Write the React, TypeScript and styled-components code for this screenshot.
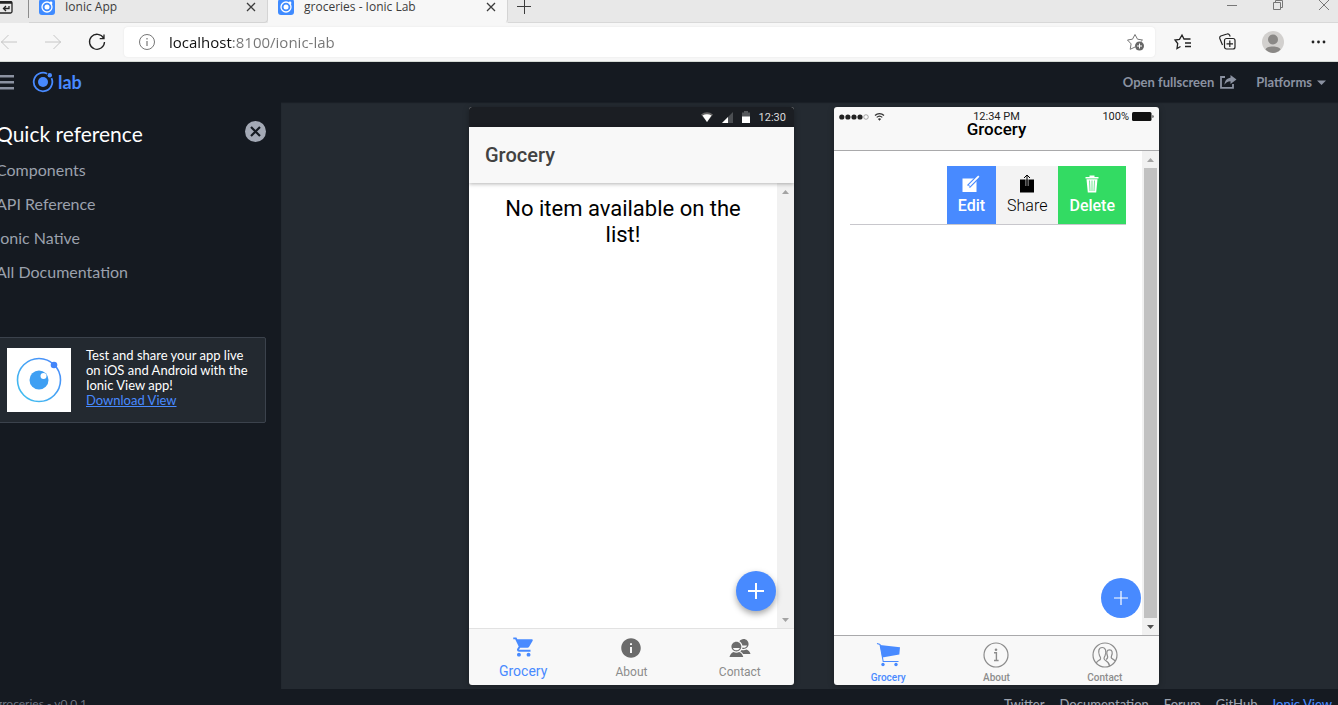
import React from 'react';
import styled, { createGlobalStyle, css } from 'styled-components';
import { IoMdCart, IoMdInformationCircle, IoMdContacts } from 'react-icons/io';

const GlobalStyle = createGlobalStyle`
  * { box-sizing: border-box; }
  body { margin: 0; background: #151a21; overflow: hidden; }
  button { border: 0; padding: 0; background: none; color: inherit; font: inherit; cursor: pointer; }
  h1, h2, p, ul { margin: 0; padding: 0; font-weight: 400; }
  ul { list-style: none; }
  svg { display: block; flex: none; }
`;

const systemFont = '"Open Sans", "Noto Sans", sans-serif';
const labFont = 'Lato, "Open Sans", sans-serif';
const appFont = 'Roboto, "Noto Sans", sans-serif';
const blue = '#488aff';

const Page = styled.div`
  display: flex;
  flex-direction: column;
  height: 100vh;
  overflow: hidden;
  font-family: ${labFont};
`;

/* Browser chrome */
const TabStrip = styled.div`
  display: flex;
  flex: none;
  height: 23px;
  background: #e8e8e8;
  font-family: ${systemFont};
  font-size: 12px;
  color: #3c3c3c;
`;
const StripStart = styled.div`
  width: 29px;
  height: 18px;
  padding-top: 1px;
  border-right: 1px solid #8c8c8c;
`;
const Tab = styled.div<{ $active?: boolean }>`
  display: flex;
  align-items: center;
  gap: 10px;
  width: ${p => (p.$active ? 240 : 239)}px;
  padding: 0 11px 8px 10px;
  border-bottom: 1px solid ${p => (p.$active ? '#f7f7f7' : '#d4d4d4')};
  border-right: 1px solid #d4d4d4;
  border-radius: 0 0 4px 0;
  background: ${p => (p.$active ? '#f7f7f7' : '#e8e8e8')};
`;
const TabTitle = styled.span`
  flex: 1;
  line-height: 14px;
  white-space: nowrap;
`;
const NewTab = styled.button`
  display: flex;
  justify-content: center;
  width: 32px;
  height: 22px;
  margin-right: auto;
`;
const StripRest = styled.div`
  display: flex;
  flex: 1;
  margin-right: -9px;
  border-bottom: 1px solid #d8d8d8;
`;
const WindowButton = styled.button`
  display: flex;
  justify-content: center;
  width: 46px;
  height: 14px;
`;
const Toolbar = styled.div`
  display: flex;
  flex: none;
  align-items: center;
  height: 39px;
  padding-bottom: 1px;
  background: #f7f7f7;
  border-bottom: 1px solid #d5dad5;
`;
const ToolGroup = styled.div<{ $end?: boolean }>`
  display: flex;
  gap: ${p => (p.$end ? 1 : 0)}px;
  margin: ${p => (p.$end ? '0 -2px 0 6px' : '0 5px 0 -13px')};
`;
const ToolButton = styled.button`
  display: flex;
  align-items: center;
  justify-content: center;
  width: 44px;
  height: 30px;
`;
const AddressBar = styled.label`
  display: flex;
  flex: 1;
  align-items: center;
  gap: 13px;
  height: 30px;
  padding: 0 9px 0 14px;
  border-radius: 4px;
  background: #fff;
  box-shadow: 0 0 2px #e2e2e2;
`;
const AddressInput = styled.input`
  flex: 1;
  min-width: 0;
  padding: 0;
  border: 0;
  outline: 0;
  font-family: ${systemFont};
  font-size: 15px;
  line-height: 22px;
  color: transparent;
  background: linear-gradient(90deg, #111 64px, #757575 64px);
  -webkit-background-clip: text;
  background-clip: text;
`;

/* Lab */
const LabHeader = styled.header`
  display: flex;
  flex: none;
  align-items: center;
  height: 40px;
  padding-right: 12px;
  background: #151a21;
  font-size: 13px;
  font-weight: 700;
  color: #8b92a1;
`;
const Brand = styled.a`
  display: flex;
  align-items: center;
  gap: 4px;
  margin: 0 auto 0 18px;
  font-size: 18px;
  line-height: 20px;
  color: ${blue};
  text-decoration: none;
`;
const HeaderButton = styled.button`
  display: flex;
  align-items: center;
  gap: 5px;
  margin-left: 19px;
`;
const Body = styled.div`
  display: flex;
  flex: 1;
  min-height: 0;
`;
const Sidebar = styled.aside`
  flex: none;
  width: 281px;
  padding: 18px 15px 0 0;
  overflow: hidden;
  background: #151a21;
`;
const SidebarHead = styled.div`
  display: flex;
  justify-content: space-between;
  margin-left: -4px;
`;
const SidebarTitle = styled.h1`
  font-size: 21px;
  line-height: 27px;
  color: #fff;
`;
const CloseButton = styled.button`
  height: 22px;
`;
const DocLinks = styled.ul`
  margin: 6px 0 48px -4px;
`;
const DocLink = styled.a`
  display: block;
  font-size: 16px;
  line-height: 34px;
  color: #9ba1ad;
  text-decoration: none;
`;
const Promo = styled.section`
  display: flex;
  gap: 15px;
  margin-left: -4px;
  padding: 10px;
  border: 1px solid #3b424c;
  border-radius: 2px;
  background: #232930;
`;
const PromoText = styled.p`
  font-size: 13px;
  line-height: 15px;
  color: #fff;
  white-space: nowrap;
`;
const PromoLink = styled.a`
  color: ${blue};
`;
const Stage = styled.main`
  display: flex;
  flex: 1;
  justify-content: center;
  gap: 40px;
  padding: 5px 0 4px 9px;
  background: #242a31;
  box-shadow: inset 0 1px 1px #1a1f26;
`;
const Footer = styled.footer`
  display: flex;
  flex: none;
  gap: 15px;
  height: 16px;
  padding: 7px 6px 0 0;
  overflow: hidden;
  background: #151a21;
  font-size: 13px;
  line-height: 16px;
  color: #6c7380;
`;
const Version = styled.span`
  margin: 0 auto 0 -4px;
  font-size: 12px;
`;
const FooterLink = styled.a<{ $accent?: boolean }>`
  font-weight: 500;
  color: ${p => (p.$accent ? blue : '#9ba1ad')};
  text-decoration: none;
`;

/* Phones */
const Phone = styled.section`
  display: flex;
  flex-direction: column;
  width: 325px;
  overflow: hidden;
  border-radius: 3px;
  background: #f8f8f8;
  box-shadow: 0 1px 6px rgba(0, 0, 0, 0.3);
  font-family: ${appFont};
`;
const AndroidStatus = styled.div`
  display: flex;
  flex: none;
  align-items: center;
  justify-content: flex-end;
  gap: 9px;
  height: 20px;
  padding-right: 8px;
  background: #1b1e23;
  color: #dcdcdc;
  font-size: 11px;
`;
const AndroidHeader = styled.h2`
  position: relative;
  z-index: 1;
  flex: none;
  padding: 0 16px;
  font-size: 20px;
  font-weight: 500;
  line-height: 56px;
  color: #424242;
  background: #f8f8f8;
  box-shadow: 0 1px 4px rgba(0, 0, 0, 0.3);
`;
const IosHeader = styled.div`
  flex: none;
  height: 44px;
  padding-top: 3px;
  border-bottom: 1px solid #a9a9ab;
  color: #000;
`;
const IosStatus = styled.div`
  display: grid;
  grid-template-columns: 1fr auto 1fr;
  align-items: center;
  height: 13px;
  padding: 0 5px;
  font-size: 11px;
  line-height: 13px;
  color: #222;
`;
const StatusStart = styled.span`
  display: flex;
  align-items: center;
  gap: 5px;
`;
const StatusEnd = styled.span`
  display: flex;
  align-items: center;
  justify-content: flex-end;
  gap: 3px;
`;
const IosTitle = styled.h2`
  font-size: 17px;
  font-weight: 500;
  line-height: 12px;
  text-align: center;
`;
const Content = styled.div`
  position: relative;
  display: flex;
  flex: 1;
  min-height: 0;
  background: #fff;
`;
const ContentBody = styled.div`
  flex: 1;
  padding: 15px 16px;
`;
const EmptyMessage = styled.p`
  margin-top: -2px;
  padding: 0 16px;
  font-size: 22px;
  line-height: 26px;
  text-align: center;
  color: #000;
`;
const ScrollTrack = styled.div`
  display: flex;
  flex: none;
  flex-direction: column;
  align-items: center;
  justify-content: space-between;
  width: 17px;
  background: #f1f1f1;
`;
const ScrollThumb = styled.div`
  flex: 1;
  width: 13px;
  background: #c1c1c1;
`;
const Fab = styled.button<{ $raised?: boolean }>`
  position: absolute;
  right: 18px;
  bottom: 17px;
  display: flex;
  align-items: center;
  justify-content: center;
  width: 40px;
  height: 40px;
  border-radius: 50%;
  background: ${blue};
  ${p => p.$raised && css`box-shadow: 0 3px 6px rgba(0, 0, 0, 0.35);`}
`;
const ItemRow = styled.div`
  display: flex;
  justify-content: flex-end;
  height: 59px;
  border-bottom: 1px solid #c8c7cc;
`;
const ItemAction = styled.button<{ $bg: string; $dark?: boolean }>`
  display: flex;
  flex-direction: column;
  align-items: center;
  gap: 2px;
  padding: 8px 11px 0;
  font-size: 16px;
  font-weight: ${p => (p.$dark ? 300 : 500)};
  line-height: 20px;
  color: ${p => (p.$dark ? '#000' : '#fff')};
  background: ${p => p.$bg};
`;
const TabBar = styled.nav<{ $ios?: boolean }>`
  display: grid;
  flex: none;
  grid-template-columns: repeat(3, 1fr);
  height: ${p => (p.$ios ? 50 : 57)}px;
  border-top: 1px solid ${p => (p.$ios ? '#a9a9ab' : '#e2e2e2')};
`;
const AndroidTab = styled.button<{ $selected?: boolean }>`
  display: flex;
  flex-direction: column;
  align-items: center;
  gap: ${p => (p.$selected ? 3 : 4)}px;
  padding-top: ${p => (p.$selected ? 6 : 7)}px;
  font-size: ${p => (p.$selected ? 14 : 12)}px;
  line-height: ${p => (p.$selected ? 18 : 16)}px;
  color: ${p => (p.$selected ? blue : '#8c8c8c')};
  svg { color: ${p => (p.$selected ? blue : '#6b6b6b')}; }
`;
const IosTab = styled.button<{ $selected?: boolean }>`
  display: flex;
  flex-direction: column;
  align-items: center;
  gap: 3px;
  padding-top: 6px;
  font-size: 10px;
  font-weight: 500;
  line-height: 14px;
  color: ${p => (p.$selected ? blue : '#8c8c8c')};
`;

const Line = ({ d, size = 18, width = 1, color = 'currentColor' }: { d: string; size?: number; width?: number; color?: string }) => (
  <svg width={size} height={size} viewBox={`0 0 ${size} ${size}`} fill="none" stroke={color} strokeWidth={width}>
    <path d={d} />
  </svg>
);

const Favicon = () => (
  <svg width="16" height="16" viewBox="0 0 16 16">
    <rect width="16" height="16" rx="3" fill="#3f8bff" />
    <circle cx="8" cy="8" r="5" fill="none" stroke="#fff" strokeWidth="1.3" />
    <circle cx="8" cy="8" r="2.5" fill="#fff" />
    <circle cx="12" cy="4" r="1.4" fill="#fff" />
  </svg>
);

const Arrow = ({ down, dark }: { down?: boolean; dark?: boolean }) => (
  <svg width="17" height="17" viewBox="0 0 17 17">
    <path d={down ? 'M5 7h7l-3.500 4z' : 'M5 11h7l-3.500 -4z'} fill={dark ? '#505050' : '#a3a3a3'} />
  </svg>
);

const IosCart = () => (
  <svg width="26" height="26" viewBox="0 0 26 26">
    <path d="M2 1.500 5 2.500 8.200 19.500H23.500" fill="none" stroke={blue} strokeWidth="1.100" />
    <path d="M5 3 25 5.300 24.300 12.500 7.300 15.500z" fill={blue} />
    <circle cx="8" cy="22.500" r="1.700" fill={blue} />
    <circle cx="21" cy="22.500" r="1.700" fill={blue} />
  </svg>
);

const IosInfo = () => (
  <svg width="26" height="26" viewBox="0 0 26 26" fill="none" stroke="#8c8c8c">
    <circle cx="13" cy="13" r="12" strokeWidth="1.200" />
    <path d="M11 10.700h2.400v7.500M11 18.500h4.600" strokeWidth="1.400" />
    <circle cx="13" cy="7.700" r="1.300" fill="#8c8c8c" stroke="none" />
  </svg>
);

const IosContacts = () => (
  <svg width="26" height="26" viewBox="0 0 26 26" fill="none" stroke="#8c8c8c" strokeWidth="1.200">
    <circle cx="13" cy="13" r="12" />
    <path d="M4.500 21c0-2 3.500-2.500 4-4 .4-1.500-.3-2-1-3.500C6 9.500 6.500 5.500 10.200 5.500s4.300 4 2.900 8c-.6 1.500-1.200 2-1 3.500.4 2 5.200 2 5.400 7" />
    <path d="M14 17.500c1.800-1 2-2 1.500-3.500-1.400-3.500-.8-6.200 2-6.200s3.400 2.700 2 6.200c-.6 1.500-.2 2.300.8 2.800 1.300.6 2 .9 2.500 2.200" />
  </svg>
);

const Wifi = () => (
  <svg width="11" height="10" viewBox="0 0 11 10" fill="none" stroke="#333">
    <path d="M1 3.500C3.500 1 7.500 1 10 3.500M2.700 5.400c1.600-1.500 4-1.500 5.600 0" strokeWidth="1.200" />
    <path d="M3.900 7c1-.9 2.200-.9 3.200 0L5.500 8.800z" fill="#333" stroke="none" />
  </svg>
);

const SignalDots = () => (
  <svg width="30" height="6" viewBox="0 0 30 6" fill="#222">
    <circle cx="2.800" cy="3" r="2.600" />
    <circle cx="8.900" cy="3" r="2.600" />
    <circle cx="15" cy="3" r="2.600" />
    <circle cx="21" cy="3" r="2.600" />
    <circle cx="27" cy="3" r="2.300" fill="none" stroke="#777" strokeWidth=".6" />
  </svg>
);

export default function App() {
  return (
    <>
      <GlobalStyle />
      <Page>
        <TabStrip>
          <StripStart>
            <svg width="13" height="13" viewBox="0 0 13 13" fill="none" stroke="#222">
              <path d="M0 .5h10.500a1.500 1.500 0 0 1 1.500 1.500v8.500a1.500 1.500 0 0 1-1.500 1.500H0M0 2h12M9 5v2.500H3.500M6 5 3.500 7.500 6 10" strokeWidth="1.300" />
            </svg>
          </StripStart>
          <Tab>
            <Favicon />
            <TabTitle>Ionic App</TabTitle>
            <button aria-label="Close Ionic App"><Line size={10} d="M1 1l8 8M9 1l-8 8" width={1.3} /></button>
          </Tab>
          <Tab $active>
            <Favicon />
            <TabTitle>groceries - Ionic Lab</TabTitle>
            <button aria-label="Close groceries"><Line size={10} d="M1 1l8 8M9 1l-8 8" width={1.3} /></button>
          </Tab>
          <StripRest>
            <NewTab aria-label="New tab"><Line size={14} d="M0 6.500h14M7.500 0v14" /></NewTab>
            <WindowButton aria-label="Minimise"><Line size={12} d="M1 5.500h10" color="#777" /></WindowButton>
            <WindowButton aria-label="Restore"><Line size={12} d="M1.500 2.500h7v7h-7zM3.500 2.500v-2h7v7h-2" color="#777" /></WindowButton>
            <WindowButton aria-label="Close window"><Line size={12} d="M1 0l10 10M11 0 1 10" color="#777" /></WindowButton>
          </StripRest>
        </TabStrip>
        <Toolbar>
          <ToolGroup>
            <ToolButton aria-label="Back"><Line d="M1 9h16M8.500 2 1.500 9l7 7" color="#c6c6c6" /></ToolButton>
            <ToolButton aria-label="Forward"><Line d="M1 9h16M9.500 2l7 7-7 7" color="#c6c6c6" /></ToolButton>
            <ToolButton aria-label="Reload"><Line d="M15.600 5.200A7.500 7.500 0 1 0 16.500 9M16 1.500v4.200h-4.300" width={1.3} color="#222" /></ToolButton>
          </ToolGroup>
          <AddressBar>
            <svg width="18" height="18" viewBox="0 0 18 18" fill="none" stroke="#777">
              <circle cx="9" cy="9" r="7.500" />
              <path d="M9 8v5M9 5v1.500" strokeWidth="1.200" />
            </svg>
            <AddressInput aria-label="Address" defaultValue="localhost:8100/ionic-lab" spellCheck={false} />
            <button aria-label="Add to favourites">
              <svg width="20" height="20" viewBox="0 0 20 20" fill="none" stroke="#777">
                <path d="M9 15l-4.800 2.300.9-5.400L1.500 8l5-.8L9 2.500l2.500 4.700 5 .8-1.700 1.700" />
                <circle cx="13.500" cy="14" r="4.500" fill="#666" stroke="none" />
                <path d="M11 14h5M13.500 11.500v5" stroke="#fff" />
              </svg>
            </button>
          </AddressBar>
          <ToolGroup $end>
            <ToolButton aria-label="Favourites"><Line size={20} d="M7.500 14.500 4 16.500l.7-5L2 8l4.500-.7L9 3l2 4h6.500M12 11h6M12 14.500h6" width={1.3} color="#222" /></ToolButton>
            <ToolButton aria-label="Collections"><Line size={20} d="M6.500 8.500a2 2 0 0 1 2-2h6.500a2 2 0 0 1 2 2v6.500a2 2 0 0 1-2 2h-6.500a2 2 0 0 1-2-2zM11.800 8.500v6.500M8.500 11.800h6.500M4.500 13 1.800 6.500a2 2 0 0 1 1-2.500L9 2a2 2 0 0 1 2.500 1l.7 1.500" width={1.2} color="#222" /></ToolButton>
            <ToolButton aria-label="Profile">
              <svg width="22" height="22" viewBox="0 0 22 22">
                <circle cx="11" cy="11" r="11" fill="#d2d0ce" />
                <circle cx="11" cy="8.500" r="5" fill="#8a8886" />
                <path d="M3.500 18.500c1-4 14-4 15 0-4 4.500-11 4.500-15 0z" fill="#8a8886" />
              </svg>
            </ToolButton>
            <ToolButton aria-label="Settings and more">
              <svg width="16" height="4" viewBox="0 0 16 4" fill="#222">
                <circle cx="3" cy="2" r="1.400" />
                <circle cx="8.500" cy="2" r="1.400" />
                <circle cx="14" cy="2" r="1.400" />
              </svg>
            </ToolButton>
          </ToolGroup>
        </Toolbar>

        <LabHeader>
          <button aria-label="Menu">
            <svg width="14" height="16" viewBox="0 0 14 16" fill="#8b92a1"><path d="M0 1h14v2.500H0zM0 7h14v2.500H0zM0 13h14v2.500H0z" /></svg>
          </button>
          <Brand href="#lab">
            <svg width="22" height="22" viewBox="0 0 22 22">
              <path d="M15.200 2.700A9.300 9.300 0 1 0 19.500 7.200" fill="none" stroke={blue} strokeWidth="1.800" />
              <circle cx="11" cy="11" r="5" fill={blue} />
              <circle cx="17.800" cy="4.300" r="2.200" fill={blue} />
            </svg>
            lab
          </Brand>
          <HeaderButton>
            Open fullscreen
            <svg width="18" height="14" viewBox="0 0 18 14" fill="none" stroke="#8b92a1">
              <path d="M6 2H2v10.800h12V9" strokeWidth="1.800" />
              <path d="M11.500 0 17.500 4.500 11.500 9V6.200C8.500 6.200 7 7.500 5.500 9.800 5.800 5.500 8 3 11.500 2.700z" fill="#8b92a1" stroke="none" />
            </svg>
          </HeaderButton>
          <HeaderButton>
            Platforms
            <svg width="9" height="5" viewBox="0 0 9 5"><path d="M0 .5h9L4.500 5z" fill="#8b92a1" /></svg>
          </HeaderButton>
        </LabHeader>

        <Body>
          <Sidebar>
            <SidebarHead>
              <SidebarTitle>Quick reference</SidebarTitle>
              <CloseButton aria-label="Close sidebar">
                <svg width="22" height="22" viewBox="0 0 22 22">
                  <circle cx="11.500" cy="11.500" r="10.500" fill="#a3a9b5" />
                  <path d="M7 7l9 9M16 7l-9 9" stroke="#151a21" strokeWidth="2.200" />
                </svg>
              </CloseButton>
            </SidebarHead>
            <DocLinks>
              {['Components', 'API Reference', 'Ionic Native', 'All Documentation'].map(t => (
                <li key={t}><DocLink href="#docs">{t}</DocLink></li>
              ))}
            </DocLinks>
            <Promo>
              <svg width="64" height="64" viewBox="0 0 64 64">
                <defs>
                  <linearGradient id="ring" x1="0" y1="1" x2="1" y2="0"><stop offset="0" stopColor="#41c4ee" /><stop offset="1" stopColor="#4a86fb" /></linearGradient>
                </defs>
                <rect width="64" height="64" fill="#fff" />
                <circle cx="32" cy="32" r="21.500" fill="none" stroke="url(#ring)" strokeWidth="1.600" />
                <circle cx="32" cy="32" r="9.500" fill="#3e9ff3" />
                <circle cx="36.500" cy="28" r="3" fill="#fff" />
                <circle cx="47" cy="17" r="3.300" fill="#4285fa" />
              </svg>
              <PromoText>
                Test and share your app live<br />on iOS and Android with the<br />Ionic View app!<br />
                <PromoLink href="#view">Download View</PromoLink>
              </PromoText>
            </Promo>
          </Sidebar>

          <Stage>
            <Phone>
              <AndroidStatus>
                <svg width="12" height="10" viewBox="0 0 12 10"><path d="M0 2.500Q6-2 12 2.500L6 10z" fill="#666" /><path d="M1.500 3.500Q6 1 10.500 3.500L6 10z" fill="#fff" /></svg>
                <svg width="11" height="11" viewBox="0 0 11 11"><path d="M11 0v11H0z" fill="#4b4e52" /><path d="M6 5v6H0z" fill="#fff" /></svg>
                <svg width="8" height="12" viewBox="0 0 8 12"><path d="M0 1.500h2V0h4v1.500h2V6H0z" fill="#55585c" /><path d="M0 5.500h8V12H0z" fill="#fff" /></svg>
                <span>12:30</span>
              </AndroidStatus>
              <AndroidHeader>Grocery</AndroidHeader>
              <Content>
                <ContentBody><EmptyMessage>No item available on the list!</EmptyMessage></ContentBody>
                <ScrollTrack><Arrow /><Arrow down /></ScrollTrack>
                <Fab $raised aria-label="Add item"><Line size={16} d="M0 8h16M8 0v16" width={2} color="#fff" /></Fab>
              </Content>
              <TabBar>
                <AndroidTab $selected><IoMdCart size={24} />Grocery</AndroidTab>
                <AndroidTab><IoMdInformationCircle size={24} />About</AndroidTab>
                <AndroidTab><IoMdContacts size={24} />Contact</AndroidTab>
              </TabBar>
            </Phone>

            <Phone>
              <IosHeader>
                <IosStatus>
                  <StatusStart><SignalDots /><Wifi /></StatusStart>
                  <span>12:34 PM</span>
                  <StatusEnd>
                    100%
                    <svg width="22" height="9" viewBox="0 0 22 9"><rect width="19.500" height="9" rx="1.500" fill="#111" /><path d="M20.500 3v3l1-.8V3.800z" fill="#111" /></svg>
                  </StatusEnd>
                </IosStatus>
                <IosTitle>Grocery</IosTitle>
              </IosHeader>
              <Content>
                <ContentBody>
                  <ItemRow>
                    <ItemAction $bg={blue}>
                      <svg width="20" height="20" viewBox="0 0 20 20"><path d="M1.500 4.500h14v13.500h-14z" fill="#fff" /><path d="M7.500 12.500 17.500 2.500" stroke={blue} strokeWidth="4" /><path d="M8.500 11.500 17.800 2.200" stroke="#fff" strokeWidth="1.800" /><path d="M6.800 13.200l.8-2 1.200 1.200z" fill="#fff" /></svg>
                      Edit
                    </ItemAction>
                    <ItemAction $bg="#f3f3f3" $dark>
                      <svg width="20" height="20" viewBox="0 0 20 20"><path d="M3 5.500h14v13H3z" fill="#000" /><path d="M9 5v7M11 5v7" stroke="#f3f3f3" strokeWidth=".8" /><path d="M10 12V1.500M7 4l3-3 3 3" fill="none" stroke="#000" /></svg>
                      Share
                    </ItemAction>
                    <ItemAction $bg="#33db63">
                      <svg width="20" height="20" viewBox="0 0 20 20"><path d="M3.500 3h4V1.500h5V3h4v1.500h-13zM4.500 5.200h11l-1.300 13.300h-8.400z" fill="#fff" /><path d="M7.500 6.500l.5 10.500M10 6.500V17M12.500 6.500l-.5 10.500" stroke="#33db63" strokeWidth=".7" /></svg>
                      Delete
                    </ItemAction>
                  </ItemRow>
                </ContentBody>
                <ScrollTrack><Arrow /><ScrollThumb /><Arrow down dark /></ScrollTrack>
                <Fab aria-label="Add item"><Line size={14} d="M0 7h14M7 0v14" width={1.2} color="#fff" /></Fab>
              </Content>
              <TabBar $ios>
                <IosTab $selected><IosCart />Grocery</IosTab>
                <IosTab><IosInfo />About</IosTab>
                <IosTab><IosContacts />Contact</IosTab>
              </TabBar>
            </Phone>
          </Stage>
        </Body>

        <Footer>
          <Version>groceries - v0.0.1</Version>
          {['Twitter', 'Documentation', 'Forum', 'GitHub'].map(t => (
            <FooterLink key={t} href="#footer">{t}</FooterLink>
          ))}
          <FooterLink $accent href="#view">Ionic View</FooterLink>
        </Footer>
      </Page>
    </>
  );
}
